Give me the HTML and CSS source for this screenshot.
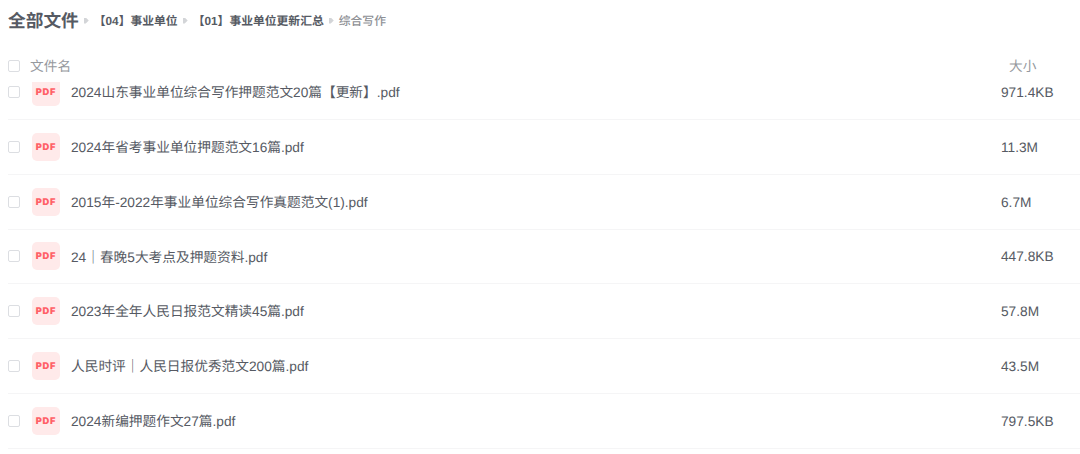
FILE: index.html
```html
<!DOCTYPE html>
<html lang="zh-CN">
	<head>
		<meta charset="UTF-8">
		<title>全部文件</title>
		<link rel="stylesheet" href="styles.css">
	</head>
	<body>
		<!--面包屑导航-->
		<div class="crumbs">
			<span class="root">全部文件</span>
			<i class="arrow"></i>
			<span class="crumb">【04】事业单位</span>
			<i class="arrow"></i>
			<span class="crumb">【01】事业单位更新汇总</span>
			<i class="arrow"></i>
			<span class="crumb current">综合写作</span>
		</div>

		<!--表头-->
		<div class="head">
			<span class="check"></span>
			<span class="head-name">文件名</span>
			<span class="head-size">大小</span>
		</div>

		<!--文件列表-->
		<div class="list">
			<div class="rows">
				<div class="row">
					<span class="check"></span>
					<span class="icon">PDF</span>
					<span class="name">2024山东事业单位综合写作押题范文20篇【更新】.pdf</span>
					<span class="size">971.4KB</span>
				</div>
				<div class="row">
					<span class="check"></span>
					<span class="icon">PDF</span>
					<span class="name">2024年省考事业单位押题范文16篇.pdf</span>
					<span class="size">11.3M</span>
				</div>
				<div class="row">
					<span class="check"></span>
					<span class="icon">PDF</span>
					<span class="name">2015年-2022年事业单位综合写作真题范文(1).pdf</span>
					<span class="size">6.7M</span>
				</div>
				<div class="row">
					<span class="check"></span>
					<span class="icon">PDF</span>
					<span class="name">24｜春晚5大考点及押题资料.pdf</span>
					<span class="size">447.8KB</span>
				</div>
				<div class="row">
					<span class="check"></span>
					<span class="icon">PDF</span>
					<span class="name">2023年全年人民日报范文精读45篇.pdf</span>
					<span class="size">57.8M</span>
				</div>
				<div class="row">
					<span class="check"></span>
					<span class="icon">PDF</span>
					<span class="name">人民时评｜人民日报优秀范文200篇.pdf</span>
					<span class="size">43.5M</span>
				</div>
				<div class="row">
					<span class="check"></span>
					<span class="icon">PDF</span>
					<span class="name">2024新编押题作文27篇.pdf</span>
					<span class="size">797.5KB</span>
				</div>
			</div>
		</div>
	</body>
</html>
```
FILE: styles.css
```css
*{
	margin: 0;
	padding: 0;
	box-sizing: border-box;
}

body{
	height: 454px;
	padding-left: 8px;
	overflow: hidden;
	background-color: #fff;
	color: #565a63;
	font-family: "Liberation Sans", "Noto Sans CJK SC", sans-serif;
	font-size: 13.7px;
	text-rendering: geometricPrecision;
}

/*面包屑*/
.crumbs{
	display: flex;
	align-items: center;
	height: 42px;
	padding-bottom: 3px;
	font-size: 11.8px;
	font-weight: bold;
	white-space: nowrap;
}

.root{
	font-size: 17.7px;
}

.crumb{
	padding-top: 2px;
}

.current{
	color: #8e9095;
	font-weight: 500;
}

/*小三角*/
.arrow{
	width: 5px;
	height: 6px;
	margin: 2px 5px 0;
	background-color: #d3d5d8;
	clip-path: polygon(0 0, 40% 0, 100% 50%, 40% 100%, 0 100%);
}

/*表头*/
.head{
	display: flex;
	align-items: center;
	height: 40px;
	padding-top: 8px;
	color: #96999e;
}

.check{
	flex: none;
	width: 12px;
	height: 12px;
	border: 1px solid #dcdee2;
	border-radius: 2px;
}

.head-name{
	flex: 1;
	margin-left: 10px;
	padding-bottom: 2px;
}

.head-size{
	width: 71px;
	padding-bottom: 2px;
}

/*列表向上滚动了一点 第一行的图标被表头遮住*/
.list{
	overflow: hidden;
}

.rows{
	margin-top: -16.8px;
}

.row{
	display: flex;
	align-items: center;
	height: 54.8px;
	border-bottom: 1px solid #f5f5f6;
}

.icon{
	flex: none;
	width: 28px;
	height: 28px;
	margin: 0 11px 0 12px;
	border-radius: 5px;
	background-color: #ffeaea;
	color: #ff6067;
	font-family: Inter, sans-serif;
	font-size: 9.3px;
	font-weight: 900;
	letter-spacing: 0.8px;
	line-height: 30px;
	text-align: center;
}

.name{
	flex: 1;
	padding-bottom: 1.6px;
	white-space: nowrap;
}

.size{
	width: 79px;
	padding-top: 1px;
}
```
